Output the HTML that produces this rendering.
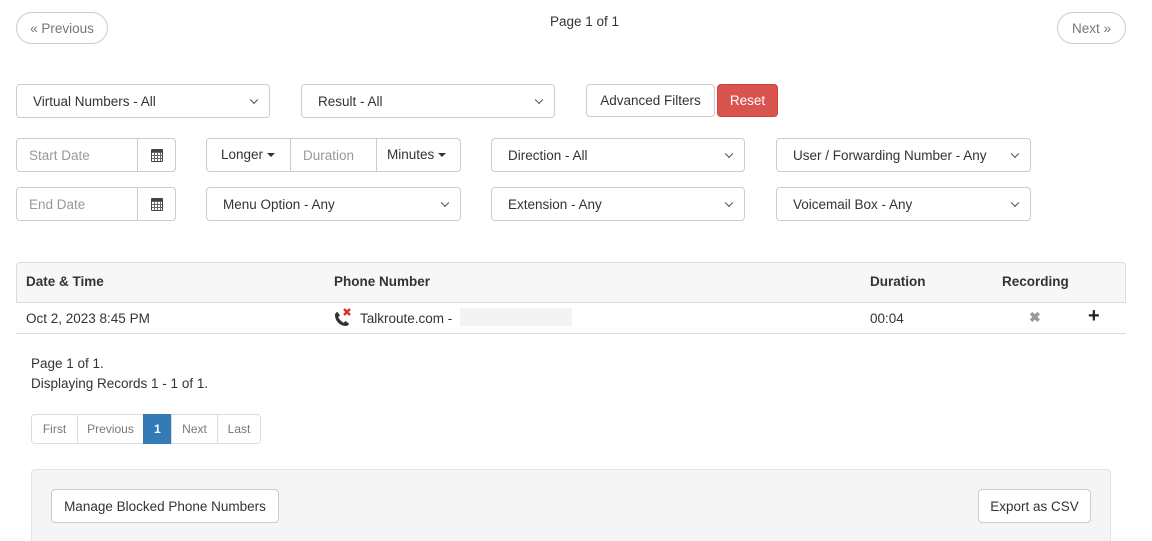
<!DOCTYPE html>
<html><head><meta charset="utf-8"><style>
*{box-sizing:border-box}
html,body{margin:0;width:1152px;height:541px;overflow:hidden}
body{background:#fff;font-family:"Liberation Sans",sans-serif;font-size:13.5px;color:#333;position:relative}
.a{position:absolute}
.b{position:absolute;border:1px solid #ccc;border-radius:4px;background:#fff;display:flex;align-items:center}
.sel{padding-left:16px}
.sel:after{content:"";position:absolute;right:12px;top:50%;width:5px;height:5px;border-right:1.8px solid #444;border-bottom:1.8px solid #444;transform:translateY(-70%) rotate(45deg)}
.ph{color:#999;padding-left:12px}
.car{display:inline-block;width:0;height:0;border-left:4px solid transparent;border-right:4px solid transparent;border-top:4px solid #333;margin-left:4px;vertical-align:middle}
.cal{width:12px;height:13px;border:1.5px solid #444;border-top-width:3px;background:repeating-linear-gradient(90deg,transparent 0 2px,#666 2px 3px),repeating-linear-gradient(0deg,transparent 0 2px,#666 2px 3px),#fff;border-radius:1px}
.th{font-weight:bold;top:274px}
.pg{position:absolute;top:414px;height:30px;border:1px solid #ddd;display:flex;align-items:center;justify-content:center;font-size:12px;color:#777;background:#fff}
</style></head><body>
<div class="b" style="left:16px;top:12px;width:92px;height:32px;border-radius:16px;justify-content:center;color:#777">« Previous</div>
<div class="a" style="left:550px;top:14px">Page 1 of 1</div>
<div class="b" style="left:1057px;top:12px;width:69px;height:32px;border-radius:16px;justify-content:center;color:#777">Next »</div>

<div class="b sel" style="left:16px;top:84px;width:254px;height:34px">Virtual Numbers - All</div>
<div class="b sel" style="left:301px;top:84px;width:254px;height:34px">Result - All</div>
<div class="b" style="left:586px;top:84px;width:129px;height:33px;justify-content:center">Advanced Filters</div>
<div class="b" style="left:717px;top:84px;width:61px;height:33px;justify-content:center;background:#d9534f;border-color:#d43f3a;color:#fff">Reset</div>

<div class="b ph" style="left:16px;top:138px;width:160px;height:34px">Start Date</div>
<div class="b" style="left:137px;top:138px;width:39px;height:34px;border-radius:0 4px 4px 0;justify-content:center"><div class="cal"></div></div>
<div class="b" style="left:206px;top:138px;width:255px;height:34px"></div>
<div class="a" style="left:221px;top:147px">Longer<span class="car"></span></div>
<div class="a" style="left:290px;top:138px;width:87px;height:34px;border-left:1px solid #ccc;border-right:1px solid #ccc;color:#999;padding:10px 0 0 12px">Duration</div>
<div class="a" style="left:387px;top:147px">Minutes<span class="car"></span></div>
<div class="b sel" style="left:491px;top:138px;width:254px;height:34px">Direction - All</div>
<div class="b sel" style="left:776px;top:138px;width:255px;height:34px">User / Forwarding Number - Any</div>

<div class="b ph" style="left:16px;top:187px;width:160px;height:34px">End Date</div>
<div class="b" style="left:137px;top:187px;width:39px;height:34px;border-radius:0 4px 4px 0;justify-content:center"><div class="cal"></div></div>
<div class="b sel" style="left:206px;top:187px;width:255px;height:34px">Menu Option - Any</div>
<div class="b sel" style="left:491px;top:187px;width:254px;height:34px">Extension - Any</div>
<div class="b sel" style="left:776px;top:187px;width:255px;height:34px">Voicemail Box - Any</div>

<div class="a" style="left:16px;top:262px;width:1110px;height:41px;background:#f7f7f7;border:1px solid #ddd;border-radius:4px 4px 0 0"></div>
<div class="a th" style="left:26px">Date &amp; Time</div>
<div class="a th" style="left:334px">Phone Number</div>
<div class="a th" style="left:870px">Duration</div>
<div class="a th" style="left:1002px">Recording</div>
<div class="a" style="left:16px;top:333px;width:1110px;height:1px;background:#ddd"></div>
<div class="a" style="left:26px;top:311px">Oct 2, 2023 8:45 PM</div>
<svg class="a" style="left:333px;top:307px" width="22" height="22" viewBox="0 0 22 22"><path d="M2 8c0-1.5 1.5-3 2.5-3l2.5 3.5-1.8 1.8c1.2 2.3 3.2 4.3 5.5 5.5l1.8-1.8 3.5 2.5c0 1-1.5 2.5-3 2.5C7 19 2 14 2 8z" fill="#333"/><path d="M11 2l6 6M17 2l-6 6" stroke="#d9302c" stroke-width="2.4"/></svg>
<div class="a" style="left:360px;top:311px">Talkroute.com -</div>
<div class="a" style="left:460px;top:308px;width:112px;height:18px;background:#f3f3f3"></div>
<div class="a" style="left:1029px;top:309px;color:#999;font-size:14px;font-weight:bold">✖</div>
<div class="a" style="left:870px;top:311px">00:04</div>
<div class="a" style="left:1088px;top:305px;font-size:20px;font-weight:bold;color:#222">+</div>

<div class="a" style="left:31px;top:356px">Page 1 of 1.</div>
<div class="a" style="left:31px;top:376px">Displaying Records 1 - 1 of 1.</div>
<div class="pg" style="left:31px;width:47px;border-radius:4px 0 0 4px">First</div>
<div class="pg" style="left:77px;width:67px">Previous</div>
<div class="pg" style="left:143px;width:29px;background:#337ab7;border-color:#337ab7;color:#fff;font-weight:bold">1</div>
<div class="pg" style="left:171px;width:47px">Next</div>
<div class="pg" style="left:217px;width:44px;border-radius:0 4px 4px 0">Last</div>

<div class="a" style="left:31px;top:469px;width:1080px;height:72px;background:#f5f5f5;border:1px solid #e3e3e3;border-bottom:none;border-radius:4px 4px 0 0"></div>
<div class="b" style="left:51px;top:489px;width:228px;height:34px;justify-content:center">Manage Blocked Phone Numbers</div>
<div class="b" style="left:978px;top:489px;width:113px;height:34px;justify-content:center">Export as CSV</div>
</body></html>
